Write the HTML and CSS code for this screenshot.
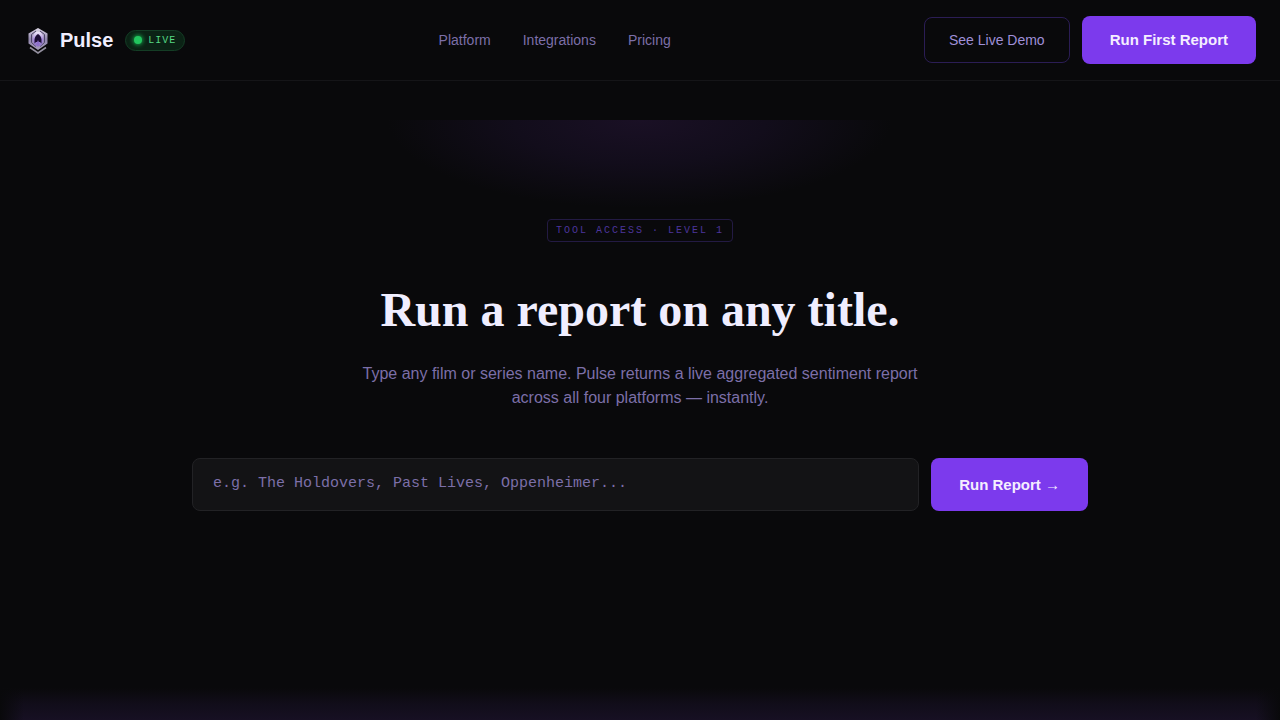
FILE: index.html
```
<!DOCTYPE html>
<html lang="en">
<head>
<meta charset="utf-8">
<meta name="viewport" content="width=device-width, initial-scale=1">
<title>Pulse</title>
<link rel="stylesheet" href="styles.css">
</head>
<body>
<header class="header">
  <div class="brand">
    <a class="logo" href="#">
      <svg class="logo-mark" viewBox="0 0 28 28" aria-hidden="true">
        <defs>
          <linearGradient id="shell" x1="0" y1="0" x2="0" y2="1">
            <stop offset="0" stop-color="#dcd7e6"/>
            <stop offset="0.5" stop-color="#9388ae"/>
            <stop offset="1" stop-color="#a59cba"/>
          </linearGradient>
          <linearGradient id="core" x1="0" y1="0" x2="0" y2="1">
            <stop offset="0" stop-color="#f6f1ff"/>
            <stop offset="0.5" stop-color="#a78bda"/>
            <stop offset="1" stop-color="#8f74c8"/>
          </linearGradient>
        </defs>
        <path d="M14 2 23.500 7.500V17.500L14 24 4.500 17.500V7.500Z" fill="url(#shell)"/>
        <path d="M12 5 7.500 8.500V16.500L12 20.500M16 5 20.500 8.500V16.500L16 20.500" fill="none" stroke="#4f456c" stroke-width="1"/>
        <ellipse cx="14" cy="13" rx="5.500" ry="7.500" fill="url(#core)"/>
        <path d="M10.500 17.500V13.500Q11 9.500 14 8Q17 9.500 17.500 13.500V17.500L16 16H12Z" fill="#1b0d33"/>
        <path d="M12.300 18 14 14 15.700 18 14 20.500Z" fill="#8d70cb"/>
        <path d="M6 21.500 14 27 22 21.500" fill="none" stroke="#938f9e" stroke-width="1.600"/>
      </svg>
      <span>Pulse</span>
    </a>
    <span class="live"><span class="live-dot"></span>LIVE</span>
  </div>
  <nav class="nav" aria-label="Main">
    <a href="#">Platform</a>
    <a href="#">Integrations</a>
    <a href="#">Pricing</a>
  </nav>
  <div class="actions">
    <button class="button button-outline" type="button">See Live Demo</button>
    <button class="button button-primary" type="button">Run First Report</button>
  </div>
</header>
<main class="hero">
  <span class="level">TOOL ACCESS · LEVEL 1</span>
  <h1 class="title">Run a report on any title.</h1>
  <p class="lead">Type any film or series name. Pulse returns a live aggregated sentiment report across all four platforms — instantly.</p>
  <form class="search">
    <input class="search-input" type="text" aria-label="Film or series name" placeholder="e.g. The Holdovers, Past Lives, Oppenheimer...">
    <button class="button button-primary" type="button">Run Report →</button>
  </form>
</main>
<div class="glow"></div>
</body>
</html>
```
FILE: styles.css
```
* {
  box-sizing: border-box;
}

body {
  margin: 0;
  min-height: 100vh;
  display: flex;
  flex-direction: column;
  background: #09090b;
  color: #f0eeff;
  font-family: "Liberation Sans", Arial, sans-serif;
}

a {
  color: inherit;
  text-decoration: none;
}

.header {
  display: flex;
  align-items: center;
  justify-content: space-between;
  padding: 16px 24px;
  border-bottom: 1px solid #151518;
}

.brand,
.logo,
.actions {
  display: flex;
  align-items: center;
}

.brand,
.actions {
  gap: 12px;
}

.logo {
  gap: 8px;
  font-size: 20px;
  font-weight: 700;
}

.logo-mark {
  width: 28px;
  height: 28px;
}

.live {
  display: flex;
  align-items: center;
  gap: 6px;
  padding: 4px 8px;
  border: 1px solid #143d25;
  border-radius: 999px;
  background: #0b2215;
  color: #56d884;
  font: 10px/11px "Liberation Mono", monospace;
  letter-spacing: 1px;
}

.live-dot {
  width: 8px;
  height: 8px;
  border-radius: 50%;
  background: #22c55e;
  box-shadow: 0 0 4px 1px #16a34a;
}

.nav {
  display: flex;
  gap: 32px;
  color: #7c6fa8;
  font-size: 14px;
}

.button {
  border: 0;
  border-radius: 8px;
  font-family: inherit;
}

.button-outline {
  padding: 14px 24px;
  border: 1px solid #2b1d55;
  background: transparent;
  color: #9f8fd8;
  font-size: 14px;
  line-height: 16px;
}

.button-primary {
  padding: 15px 28px;
  background: #7c3aed;
  color: #f5eeff;
  font-size: 15px;
  font-weight: 700;
  line-height: 18px;
}

.hero {
  display: flex;
  flex: 1;
  flex-direction: column;
  align-items: center;
  margin-top: 39px;
  padding: 99px 24px 64px;
  background: radial-gradient(ellipse 252px 88px at 50% 0, #1a1025, #120d1b 50%, #09090b);
}

.level {
  padding: 5px 8px;
  border: 1px solid #231a43;
  border-radius: 4px;
  color: #4c359c;
  font: 10px/11px "Liberation Mono", monospace;
  letter-spacing: 2px;
}

.title {
  margin: 40px 0 24px;
  font: 700 48px/56px "Liberation Serif", serif;
  text-align: center;
}

.lead {
  max-width: 560px;
  margin: 0 0 48px;
  color: #7c6fa8;
  font-size: 16px;
  line-height: 24px;
  text-align: center;
}

.search {
  display: flex;
  gap: 12px;
  width: 100%;
  max-width: 896px;
}

.search-input {
  flex: 1;
  min-width: 0;
  height: 53px;
  padding: 14px 20px 17px;
  border: 1px solid #222225;
  border-radius: 8px;
  background: #131315;
  color: #f0eeff;
  font: 15px/20px "Liberation Mono", monospace;
}

.search-input::placeholder {
  color: #7c6fa8;
  opacity: 1;
}

.glow {
  height: 32px;
  background:
    linear-gradient(90deg, #09090b, transparent 24px, transparent calc(100% - 24px), #09090b),
    linear-gradient(#09090b, #110d1a 50%, #171023);
}
```
